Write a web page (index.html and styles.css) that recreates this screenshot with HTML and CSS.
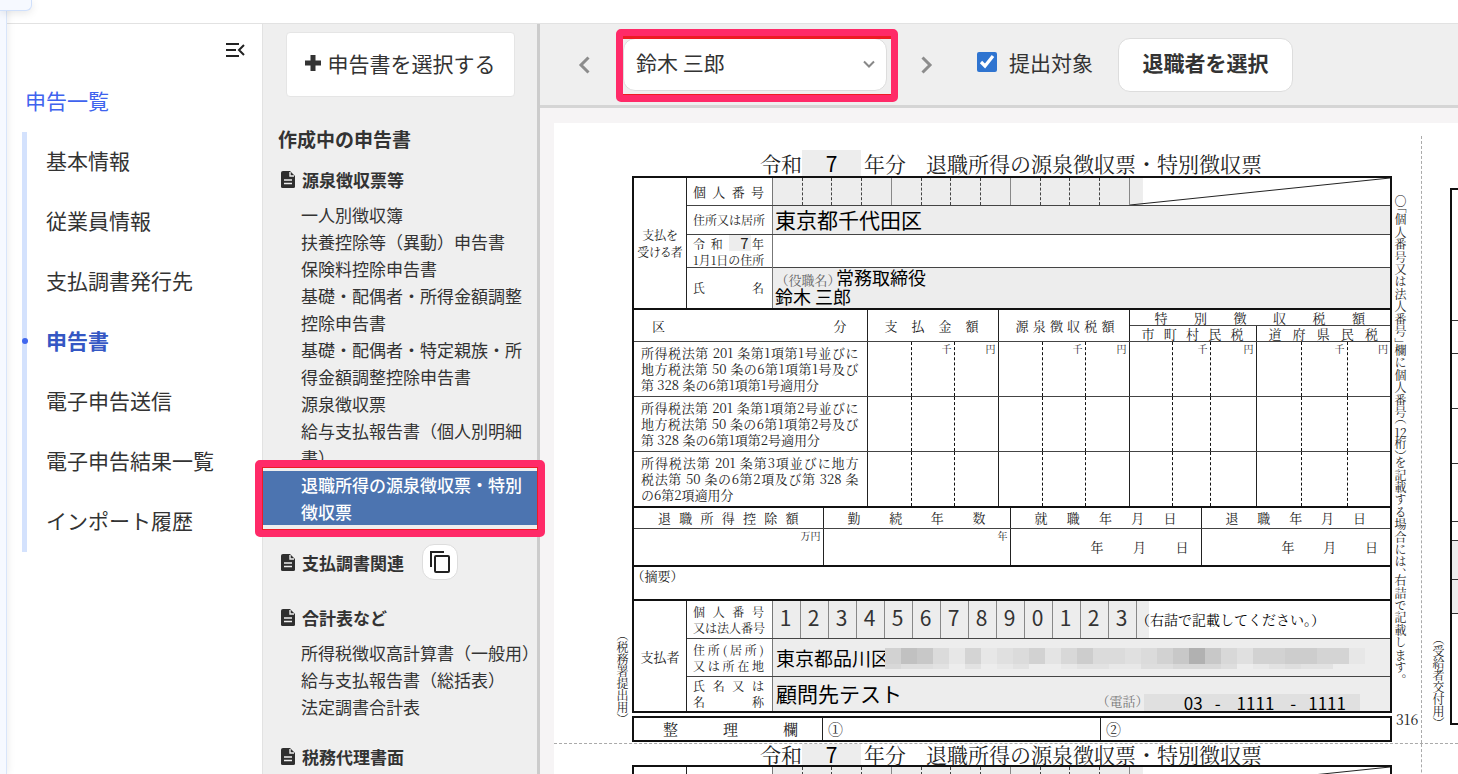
FILE: index.html
```html
<!DOCTYPE html>
<html lang="ja">
<head>
<meta charset="utf-8">
<title>申告書</title>
<link rel="stylesheet" href="styles.css">
</head>
<body>
<svg class="defs" aria-hidden="true">
  <symbol id="doc" viewBox="0 0 14 17"><path d="M2 0h7l5 5v10.500q0 1.500-1.500 1.500h-11q-1.500 0-1.500-1.500v-14q0-1.500 2-1.500z" fill="#2f2f2f"/><path d="M9 1v4h4M3 9h8M3 12.500h8" stroke="#efefef" stroke-width="1.400" fill="none"/></symbol>
</svg>
<div class="app">
  <div class="rail"><div class="rail-tab"></div></div>
  <div class="shell">
    <header class="topbar"></header>
    <div class="columns">
      <nav class="nav">
        <button class="collapse" aria-label="メニューを閉じる"><svg width="20" height="16" viewBox="0 0 20 16"><path d="M1 2h13M1 8h10M1 14h13M19 3l-5 5 5 5" fill="none" stroke="#222" stroke-width="2"/></svg></button>
        <a class="nav-top" href="#">申告一覧</a>
        <ul class="nav-list">
          <li><a href="#">基本情報</a></li>
          <li><a href="#">従業員情報</a></li>
          <li><a href="#">支払調書発行先</a></li>
          <li class="active"><a href="#">申告書</a></li>
          <li><a href="#">電子申告送信</a></li>
          <li><a href="#">電子申告結果一覧</a></li>
          <li><a href="#">インポート履歴</a></li>
        </ul>
      </nav>
      <aside class="forms">
        <button class="pick"><svg width="18" height="18" viewBox="0 0 18 18"><path d="M9 1v16M1 9h16" stroke="#333" stroke-width="5"/></svg>申告書を選択する</button>
        <h2>作成中の申告書</h2>
        <h3><svg class="doc"><use href="#doc"/></svg>源泉徴収票等</h3>
        <ul class="form-list">
          <li><a href="#">一人別徴収簿</a></li>
          <li><a href="#">扶養控除等（異動）申告書</a></li>
          <li><a href="#">保険料控除申告書</a></li>
          <li><a href="#">基礎・配偶者・所得金額調整控除申告書</a></li>
          <li><a href="#">基礎・配偶者・特定親族・所得金額調整控除申告書</a></li>
          <li><a href="#">源泉徴収票</a></li>
          <li><a href="#">給与支払報告書（個人別明細書）</a></li>
          <li class="selected"><a href="#">退職所得の源泉徴収票・特別徴収票</a></li>
        </ul>
        <h3 class="with-copy"><svg class="doc"><use href="#doc"/></svg>支払調書関連
          <button class="copy" aria-label="コピー"><svg width="22" height="24" viewBox="0 0 22 24"><path d="M2 17V2h13" fill="none" stroke="#222" stroke-width="2"/><rect x="6" y="6" width="14" height="16" rx="1" fill="none" stroke="#222" stroke-width="2"/></svg></button></h3>
        <h3 class="totals"><svg class="doc"><use href="#doc"/></svg>合計表など</h3>
        <ul class="form-list">
          <li class="one-line"><a href="#">所得税徴収高計算書（一般用）</a></li>
          <li><a href="#">給与支払報告書（総括表）</a></li>
          <li><a href="#">法定調書合計表</a></li>
        </ul>
        <h3 class="agent"><svg class="doc"><use href="#doc"/></svg>税務代理書面</h3>
      </aside>
      <main class="main">
        <div class="toolbar">
          <button class="step" aria-label="前へ"><svg width="12" height="18" viewBox="0 0 12 18"><path d="M10.500 1.500L3 9l7.500 7.500" fill="none" stroke="#8c8c8c" stroke-width="3"/></svg></button>
          <div class="person">
            <select aria-label="退職者"><option>鈴木 三郎</option></select>
            <svg class="caret" width="12" height="9" viewBox="0 0 12 9"><path d="M1 1.500l5 5 5-5" fill="none" stroke="#888" stroke-width="2"/></svg>
          </div>
          <button class="step" aria-label="次へ"><svg width="12" height="18" viewBox="0 0 12 18"><path d="M1.500 1.500L9 9l-7.500 7.500" fill="none" stroke="#8c8c8c" stroke-width="3"/></svg></button>
          <label class="target"><input type="checkbox" checked>提出対象</label>
          <button class="choose">退職者を選択</button>
        </div>
        <div class="viewer">
          <div class="paper">
            <div class="margin-left"><span class="vert">（税務署提出用）</span></div>
            <div class="slip">
              <h1 class="title"><span>令和</span><span class="year">7</span><span class="nen">年分</span><span>退職所得の源泉徴収票・特別徴収票</span></h1>
              <div class="box">
                <section class="party">
                  <div class="who"><span>支払を</span><span>受ける者</span></div>
                  <div class="fields">
                    <div class="row r1"><div class="lab"><span class="sp">個人番号</span></div>
                      <div class="val mynum"><i></i><i></i><i></i><i></i><i></i><i></i><i></i><i></i><i></i><i></i><i></i><i></i><svg class="slash" viewBox="0 0 262 27" preserveAspectRatio="none"><path d="M13 0h249v27H13z" fill="#fff"/><path d="M0 27L262 0" stroke="#222" fill="none"/></svg></div></div>
                    <div class="row r2"><div class="lab"><span class="sp">住所又は居所</span></div><div class="val gray big">東京都千代田区</div></div>
                    <div class="row r3"><div class="lab"><span class="sp era">令 和 <b>7</b>年</span><span class="sp">1月1日の住所</span></div><div class="val"></div></div>
                    <div class="row r4"><div class="lab"><span class="sp">氏名</span></div><div class="val gray name"><div><small>（役職名）</small>常務取締役</div><div>鈴木 三郎</div></div></div>
                  </div>
                </section>
                <table class="amounts">
                  <colgroup><col class="c0"><col class="c1"><col class="c2"><col class="c3"><col class="c4"></colgroup>
                  <thead>
                    <tr><th rowspan="2"><span class="sp wide">区分</span></th><th rowspan="2"><span class="sp mid">支払金額</span></th><th rowspan="2"><span class="sp mid2">源泉徴収税額</span></th><th colspan="2"><span class="sp special">特別徴収税額</span></th></tr>
                    <tr><th><span class="sp tax">市町村民税</span></th><th><span class="sp tax">道府県民税</span></th></tr>
                  </thead>
                  <tbody>
                    <tr><td class="desc"><p>所得税法第 201 条第1項第1号並びに</p><p>地方税法第 50 条の6第1項第1号及び</p><p class="end">第 328 条の6第1項第1号適用分</p></td><td><div class="digits d1"><span></span><span>千</span><span>円</span></div></td><td><div class="digits d1"><span></span><span>千</span><span>円</span></div></td><td><div class="digits d3"><span></span><span>千</span><span>円</span></div></td><td><div class="digits d4"><span></span><span>千</span><span>円</span></div></td></tr>
                    <tr><td class="desc"><p>所得税法第 201 条第1項第2号並びに</p><p>地方税法第 50 条の6第1項第2号及び</p><p class="end">第 328 条の6第1項第2号適用分</p></td><td><div class="digits d1"><span></span><span></span><span></span></div></td><td><div class="digits d1"><span></span><span></span><span></span></div></td><td><div class="digits d3"><span></span><span></span><span></span></div></td><td><div class="digits d4"><span></span><span></span><span></span></div></td></tr>
                    <tr><td class="desc"><p>所得税法第 201 条第3項並びに地方</p><p>税法第 50 条の6第2項及び第 328 条</p><p class="end">の6第2項適用分</p></td><td><div class="digits d1"><span></span><span></span><span></span></div></td><td><div class="digits d1"><span></span><span></span><span></span></div></td><td><div class="digits d3"><span></span><span></span><span></span></div></td><td><div class="digits d4"><span></span><span></span><span></span></div></td></tr>
                  </tbody>
                </table>
                <table class="terms">
                  <colgroup><col class="t0"><col class="t1"><col class="t2"><col class="t3"></colgroup>
                  <thead><tr><th><span class="sp">退職所得控除額</span></th><th><span class="sp">勤続年数</span></th><th><span class="sp">就職年月日</span></th><th><span class="sp">退職年月日</span></th></tr></thead>
                  <tbody><tr><td class="unit">万円</td><td class="unit">年</td><td><span class="sp ymd">年月日</span></td><td><span class="sp ymd">年月日</span></td></tr></tbody>
                </table>
                <div class="summary">（摘要）</div>
                <section class="party payer">
                  <div class="who"><span>支払者</span></div>
                  <div class="fields">
                    <div class="row p1"><div class="lab"><span class="sp">個人番号</span><span class="sp">又は法人番号</span></div>
                      <div class="val corp"><b>1</b><b>2</b><b>3</b><b>4</b><b>5</b><b>6</b><b>7</b><b>8</b><b>9</b><b>0</b><b>1</b><b>2</b><b>3</b><i></i><span>（右詰で記載してください。）</span></div></div>
                    <div class="row p2"><div class="lab"><span class="sp">住所(居所)</span><span class="sp">又は所在地</span></div><div class="val gray addr">東京都品川区<svg class="mosaic" width="480" height="21" viewBox="0 0 480 21" shape-rendering="crispEdges">
                      <rect width="480" height="21" fill="#ededed"/>
                      <path d="M0 0h16v16H0zM144 0h16v16h-16zM272 0h16v16h-16zM368 0h32v16h-32z" fill="#d2d2d2"/>
                      <path d="M16 0h16v16H16z" fill="#c1c1c1"/>
                      <path d="M32 0h16v16H32zM288 0h16v16h-16zM320 0h16v16h-16z" fill="#c8c8c8"/>
                      <path d="M48 0h16v16H48zM128 0h16v16h-16zM208 0h32v16h-32zM256 0h16v16h-16z" fill="#dbdbdb"/>
                      <path d="M64 0h16v16H64zM96 0h16v16H96zM464 0h16v16h-16z" fill="#e7e7e7"/>
                      <path d="M80 0h16v16H80zM432 0h32v16h-32z" fill="#d4d4d4"/>
                      <path d="M112 0h16v16h-16zM240 0h16v16h-16zM352 0h16v16h-16z" fill="#e0e0e0"/>
                      <path d="M160 0h16v16h-16z" fill="#e4e4e4"/>
                      <path d="M176 0h16v16h-16zM336 0h16v16h-16zM0 16h16v5H0zM288 16h48v5h-48z" fill="#d8d8d8"/>
                      <path d="M192 0h16v16h-16zM400 0h32v16h-32z" fill="#cdcdcd"/>
                      <path d="M304 0h16v16h-16z" fill="#b1b1b1"/>
                      <path d="M16 16h32v5H16zM256 16h32v5h-32zM336 16h16v5h-16zM400 16h16v5h-16z" fill="#dedede"/>
                      <path d="M48 16h16v5H48zM80 16h16v5H80zM128 16h16v5h-16zM192 16h32v5h-32zM384 16h16v5h-16zM416 16h32v5h-32z" fill="#e2e2e2"/>
                      <path d="M112 16h16v5h-16zM176 16h16v5h-16zM224 16h32v5h-32zM368 16h16v5h-16z" fill="#e8e8e8"/>
                    </svg></div></div>
                    <div class="row p3"><div class="lab"><span class="sp">氏名又は</span><span class="sp">名称</span></div><div class="val gray payee"><span>顧問先テスト</span><span class="tel"><small>（電話）</small><span class="nums"><em>03</em><em class="d-one">-</em><em>1111</em><em class="d-two">-</em><em>1111</em></span></span></div></div>
                  </div>
                </section>
              </div>
              <div class="box office"><div class="seiri"><span class="sp">整理欄</span></div><div class="one">①</div><div class="two">②</div></div>
            </div>
            <div class="margin-right"><span class="vert note">〇「個人番号又は法人番号」欄に個人番号（<span class="tcy">12</span>桁）を記載する場合には、右詰で記載します。</span><span class="code">316</span></div>
            <div class="next-page"><span class="vert">（受給者交付用）</span>
              <div class="next-box"><i class="n1"></i><i class="n2"></i><i class="n3"></i><i class="n3"></i><i class="n4"></i><i class="n5"></i><i class="n6 shade"></i><i class="n7 shade"></i><i></i></div></div>
          </div>
          <div class="paper second">
            <div class="margin-left"></div>
            <div class="slip">
              <h2 class="title"><span>令和</span><span class="year">7</span><span class="nen">年分</span><span>退職所得の源泉徴収票・特別徴収票</span></h2>
              <div class="box">
                <section class="party">
                  <div class="who"></div>
                  <div class="fields">
                    <div class="row r1"><div class="lab"></div>
                      <div class="val mynum"><i></i><i></i><i></i><i></i><i></i><i></i><i></i><i></i><i></i><i></i><i></i><i></i><svg class="slash" viewBox="0 0 262 27" preserveAspectRatio="none"><path d="M13 0h249v27H13z" fill="#fff"/><path d="M0 27L262 0" stroke="#222" fill="none"/></svg></div></div>
                  </div>
                </section>
              </div>
            </div>
            <div class="margin-right"></div>
            <div class="next-page"></div>
          </div>
        </div>
      </main>
    </div>
  </div>
</div>
</body>
</html>
```
FILE: styles.css
```css
* { box-sizing: border-box; }
body { margin: 0; background: #fff; color: #333; font-family: "Noto Sans CJK JP", sans-serif; font-size: 21px; }
button, select, input { font: inherit; color: inherit; margin: 0; }
button { padding: 0; border: 0; background: none; }
ul, h1, h2, h3, p { margin: 0; padding: 0; list-style: none; font-size: inherit; }
a { color: inherit; text-decoration: none; }
i, em { font-style: normal; }
.defs { display: none; }

.app { display: flex; height: 100vh; overflow: hidden; }
.rail { position: relative; flex: 0 0 7px; background: #f6f9ff; border-right: 1px solid #d8e5fa; box-shadow: 0 0 8px rgba(0, 0, 0, .1); z-index: 1; }
.rail-tab { position: absolute; left: 0; top: 0; width: 32px; height: 11px; background: #f6f9ff; border: solid #d0e0fb; border-width: 0 1px 1px 0; border-radius: 0 0 6px 0; box-shadow: 0 2px 8px rgba(0, 0, 0, .1); }
.shell { flex: 1; min-width: 0; display: flex; flex-direction: column; }
.topbar { flex: 0 0 24px; border-bottom: 1px solid #e2e2e2; }
.columns { flex: 1; min-height: 0; display: flex; }

.nav { flex: 0 0 255px; padding: 16px 15px 0; display: flex; flex-direction: column; }
.collapse { align-self: flex-end; height: 20px; margin-right: 2px; line-height: 1; }
.collapse svg { display: block; }
.nav-top { color: #3f63ee; line-height: 30px; margin: 25px 0 17px 3px; }
.nav-list { border-left: 5px solid #d4e2fd; }
.nav-list li { position: relative; height: 60px; line-height: 56px; padding-left: 19px; white-space: nowrap; }
.nav-list .active { color: #3557c4; font-weight: 700; }
.active::before { content: ""; position: absolute; left: -5px; top: 26px; width: 6px; height: 6px; border-radius: 50%; background: #4067ee; }

.forms { position: relative; z-index: 2; flex: 0 0 278px; min-width: 0; background: #efefef; border-left: 1px solid #e2e2e2; border-right: 3px solid #ccc; color: #333; }
.pick { display: flex; align-items: center; justify-content: center; gap: 6px; width: 229px; height: 65px; margin: 8px 0 0 23px; background: #fff; border: 1px solid #e5e5e5; border-radius: 4px; padding: 0 2px 4px 0; }
.forms h2 { font-size: 19px; line-height: 30px; margin: 27px 0 0 15px; }
.forms h3 { display: flex; align-items: center; gap: 7px; font-size: 17px; line-height: 27px; margin: 12px 0 8px 18px; }
.doc { width: 14px; height: 17px; }
.form-list { font-size: 17px; line-height: 27px; }
.form-list li { padding: 0 9px 0 38px; }
.form-list .one-line { white-space: nowrap; padding-right: 0; }
.form-list .selected { position: relative; background: #4c74b0; color: #fff; font-weight: 500; }
.selected::after { content: ""; position: absolute; inset: -11px -8px -12px -8px; border: 7px solid #ff2a68; border-radius: 5px; box-shadow: inset 0 0 0 1px #ed1c24; }
.forms .with-copy { height: 36px; margin: 19px 0 0 18px; }
.copy { display: grid; place-items: center; width: 36px; height: 36px; margin-left: 11px; background: #fff; border: 1px solid #ddd; border-radius: 12px; }
.forms .totals { margin: 24px 0 8px 18px; }
.forms .agent { margin-top: 23px; }

.main { flex: 1; min-width: 0; display: flex; flex-direction: column; background: #f6f4f5; }
.toolbar { flex: 0 0 84px; display: flex; align-items: center; background: #efefef; border-bottom: 3px solid #d5d5d5; padding-left: 38px; }
.step { width: 12px; height: 18px; }
.step svg { display: block; }
.person { position: relative; width: 264px; margin: 0 34px 0 33px; }
.person::after { content: ""; position: absolute; inset: -9px -11px -11px -7px; border: 7px solid #ff2a68; border-radius: 5px; box-shadow: inset 0 3px #ed1c24, inset 0 -1px #ed1c24; pointer-events: none; }
.person select { display: block; appearance: none; width: 100%; height: 53px; padding: 0 12px 6px; background: #fff; border: 1px solid #ddd; border-radius: 12px; }
.caret { position: absolute; right: 12px; top: 22px; }
.target { display: flex; align-items: center; gap: 12px; margin-left: 44px; padding-bottom: 6px; }
.target input { width: 20px; height: 20px; accent-color: #2f74d0; }
.choose { width: 175px; height: 54px; margin-left: 25px; background: #fff; border: 1px solid #ddd; border-radius: 12px; font-weight: 700; padding-bottom: 5px; }

.viewer { flex: 1; min-height: 0; overflow: hidden; margin: 15px 0 0 14px; background: #fff; color: #222; font-family: "Noto Serif CJK JP", "Liberation Serif", serif; font-weight: 400; font-size: 13px; }
.paper { display: grid; grid-template-columns: 78px 760px 30px 1fr; height: 621px; padding-top: 13px; border-bottom: 1px dashed #aaa; }
.margin-left, .margin-right, .next-page { position: relative; }
.margin-left .vert { position: absolute; right: 3px; bottom: 24px; }
.vert { writing-mode: vertical-rl; font-size: 12px; line-height: 14px; white-space: nowrap; font-feature-settings: "vhal"; }
.slip { padding-top: 14px; }
.title { display: flex; justify-content: flex-start; padding-left: 128px; font-size: 21px; line-height: 26px; height: 26px; font-weight: 400; white-space: nowrap; }
.year { width: 59px; background: #ededed; text-align: center; color: #000; font-family: "Noto Sans CJK JP", sans-serif; }
.nen { margin: 0 20px 0 3px; }
.box { border: 2px solid #111; }
.sp { display: block; text-align: justify; text-align-last: justify; white-space: nowrap; }

.party { display: grid; grid-template-columns: 53px minmax(0, 1fr); border-bottom: 2px solid #111; }
.who { display: flex; flex-direction: column; align-items: center; justify-content: center; border-right: 1px solid #222; font-size: 12px; line-height: 17px; white-space: nowrap; font-feature-settings: "palt"; }
.row { display: grid; grid-template-columns: 86px minmax(0, 1fr); border-bottom: 1px solid #444; }
.row:last-child { border-bottom: 0; }
.lab { border-right: 1px solid #777; padding: 0 8px 0 6px; display: flex; flex-direction: column; justify-content: center; line-height: 16px; font-size: 12px; }
.val { font-family: "Noto Sans CJK JP", sans-serif; color: #000; white-space: nowrap; }
.gray { background: #ededed; }
.r1 { height: 28px; }
.r1 .lab { font-size: 13px; }
.r2 { height: 29px; }
.r3 { height: 33px; }
.r4 { height: 40px; }
.mynum { display: flex; background: #ededed; }
.mynum i { flex: 0 0 30px; border-right: 1px dashed #444; }
.mynum i:nth-child(4n+2) { flex-basis: 29px; }
.mynum i:nth-child(4n) { border-right: 1px solid #888; }
.slash { flex: 1 1 0; width: 0; min-width: 0; height: 27px; }
.big { font-size: 21px; line-height: 27px; padding-left: 2px; }
.era b { display: inline-block; width: 22px; background: #ededed; font: 400 15px/16px "Noto Sans CJK JP", sans-serif; text-align: right; text-align-last: right; padding-right: 2px; }
.name { font-size: 18px; line-height: 19px; padding-left: 2px; }
.name small { margin: 0 2px 0 7px; font-size: 13px; line-height: 13px; color: #666; font-family: "Noto Serif CJK JP", "Liberation Serif", serif; font-feature-settings: "halt"; }

table { width: 100%; table-layout: fixed; border-collapse: collapse; }
th, td { padding: 0; font-weight: 400; border-right: 1px solid #222; border-bottom: 1px solid #444; }
th:last-child, td:last-child { border-right: 0; }
thead tr:first-child th:nth-child(4) { border-right: 0; }
.amounts { border-bottom: 2px solid #111; }
.c0 { width: 233px; } .c1, .c2 { width: 131px; } .c3 { width: 127px; }
.amounts thead tr { line-height: 15px; }
.wide { margin: 0 20px 0 18px; } .mid { margin: 0 19px 0 17px; } .mid2 { margin: 0 14px 0 17px; }
.special { margin: 0 25px; } .tax { margin: 0 12px; }
.desc { padding: 0 8px 0 7px; line-height: 16px; }
.desc p { text-align: justify; text-align-last: justify; white-space: nowrap; }
.desc .end { text-align: left; text-align-last: left; }
.digits { display: grid; height: 54px; font-size: 10px; line-height: 13px; text-align: right; }
.digits span { padding-right: 2px; }
.digits span + span { border-left: 1px dashed #111; }
.d1 { grid-template-columns: 43px 43px 1fr; } .d3 { grid-template-columns: 42px 38px 1fr; } .d4 { grid-template-columns: 44px 46px 1fr; }

.t0 { width: 189px; } .t1 { width: 187px; } .t2 { width: 191px; }
.terms thead tr { height: 20px; line-height: 19px; }
.terms tbody tr { height: 38px; }
.terms { border-bottom: 2px solid #111; }
.terms th .sp { margin: 0 24px; }
.unit { vertical-align: top; text-align: right; font-size: 10px; line-height: 14px; padding-right: 2px; }
.ymd { margin: 0 12px 0 80px; }
.summary { height: 34px; line-height: 18px; padding-left: 4px; border-bottom: 2px solid #111; font-feature-settings: "halt"; }

.payer { border-bottom: 0; }
.payer .who { font-size: 13px; }
.p1 { height: 38px; } .p2 { height: 38px; } .p3 { height: 34px; }
.corp { display: flex; line-height: 36px; }
.corp b { flex: 0 0 28px; background: #ededed; border-right: 1px solid #888; text-align: center; font-size: 21px; font-weight: 400; color: #333; line-height: 33px; padding-right: 2px; }
.corp i { flex: 0 0 12px; background: #ededed; }
.corp span { font-size: 14px; font-family: "Noto Serif CJK JP", "Liberation Serif", serif; margin-left: -6px; font-feature-settings: "halt"; }
.addr { display: flex; align-items: center; font-size: 19px; line-height: 36px; padding-left: 3px; }
.mosaic { flex: none; margin: 2px 0 0 -5px; }
.payee { display: flex; justify-content: space-between; font-size: 21px; line-height: 33px; padding: 0 30px 0 3px; }
.tel { display: flex; align-items: flex-end; }
.tel small { margin-right: 2px; font-size: 13px; line-height: 20px; color: #777; font-family: "Noto Serif CJK JP", "Liberation Serif", serif; font-feature-settings: "halt"; }
.nums { display: flex; gap: 12px; width: 216px; height: 17px; justify-content: flex-end; padding-right: 14px; background: #e0e0e0; font-size: 17px; line-height: 17px; }
.d-one { margin-right: 4px; }
.d-two { margin-left: 4px; }
.office { display: grid; grid-template-columns: 189px 278px 1fr; height: 26px; margin-top: 3px; line-height: 22px; font-size: 15px; }
.seiri, .one { border-right: 1px solid #222; }
.seiri .sp { margin: 0 24px 0 29px; }
.one, .two { padding-left: 5px; }

.margin-right { border-right: 1px dashed #aaa; }
.note { position: absolute; left: 1px; top: 59px; height: 485px; text-align: justify; text-align-last: justify; }
.tcy { text-combine-upright: all; text-align-last: auto; font-feature-settings: normal; }
.code { position: absolute; left: 4px; top: 575px; font-size: 14px; line-height: 16px; }
.next-page .vert { position: absolute; left: 9px; bottom: 20px; }
.next-box { display: flex; flex-direction: column; height: 537px; margin: 52px 0 0 28px; border: solid #111; border-width: 2px 0 2px 2px; }
.next-box i { border-bottom: 1px solid #333; }
.n1 { flex: 0 0 131px; } .n2 { flex: 0 0 33px; } .n3 { flex: 0 0 55px; } .n4 { flex: 0 0 58px; } .n5 { flex: 0 0 19px; } .n6 { flex: 0 0 39px; } .n7 { flex: 0 0 34px; }
.next-box i:last-child { border: 0; }
.shade { background: #ededed; }
.second { padding-top: 0; height: 60px; }
.second .slip { padding-top: 0; }
.second .title { height: 21px; line-height: 21px; }
```
